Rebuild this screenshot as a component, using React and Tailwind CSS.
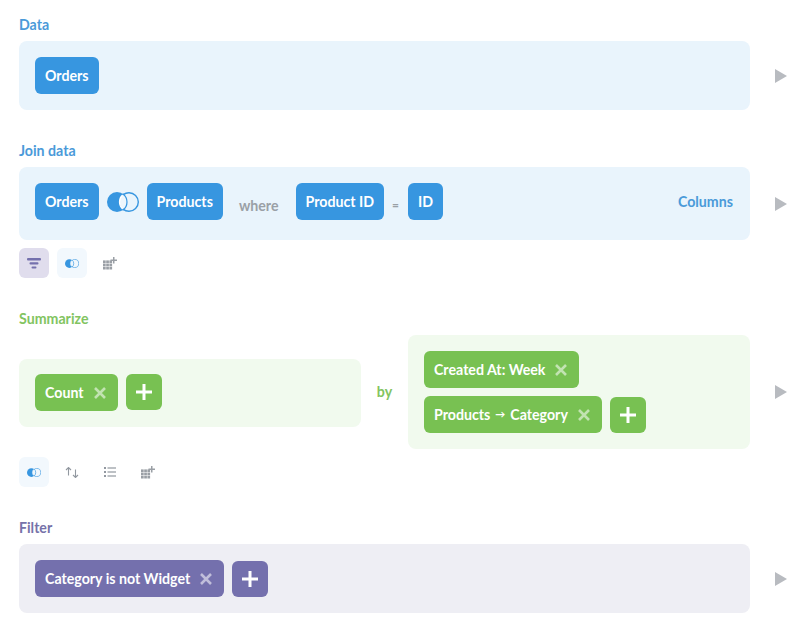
const font = { fontFamily: 'Lato, sans-serif' };

const themes = {
  blue: { panel: 'bg-[#e9f4fc]', pill: 'bg-[#3796e0]', label: 'text-[#4a9ad9]' },
  green: { panel: 'bg-[#f1faee]', pill: 'bg-[#78c152]', label: 'text-[#82c461]' },
  purple: { panel: 'bg-[#eeeef4]', pill: 'bg-[#7470ad]', label: 'text-[#7672a9]' },
};

const JoinIcon = ({ className }) => (
  <svg viewBox="0 0 32 20" className={className}>
    <circle cx="10" cy="10" r="10" fill="#3796e0" />
    <path d="M16 2A10 10 0 0 0 16 18A10 10 0 0 0 16 2Z" fill="#eef6fc" stroke="#3796e0" strokeWidth="1.2" />
    <path d="M15.6 3A9.4 9.4 0 0 0 15.6 17" fill="none" stroke="#fff" strokeWidth="1.2" />
    <circle cx="22" cy="10" r="9.3" fill="none" stroke="#3796e0" strokeWidth="1.4" strokeDasharray="42 16.4" strokeDashoffset="21" />
  </svg>
);

const FilterIcon = () => (
  <svg viewBox="0 0 14 11" className="w-[14px] h-[11px]" fill="#7470ad">
    <rect x="0" y="0" width="14" height="2.4" rx="1" />
    <rect x="2.5" y="4.2" width="9" height="2.2" rx="1" />
    <rect x="4.5" y="8.4" width="5" height="2.2" rx="1" />
  </svg>
);

const AddColumnIcon = () => (
  <svg viewBox="0 0 14 13" className="w-[14px] h-[13px]" fill="#9a9fa5">
    {[0, 1, 2].map(r =>
      [0, 1, 2].map(c => <rect key={`${r}-${c}`} x={c * 3.2} y={3.4 + r * 3.2} width="2.7" height="2.7" />)
    )}
    <path d="M10 0h1.5v2.5H14V4h-2.5v2.5H10V4H7.5V2.5H10z" />
  </svg>
);

const SortIcon = () => (
  <svg viewBox="0 0 14 11" className="w-[14px] h-[11px]" fill="none" stroke="#9298a0" strokeWidth="1.1">
    <path d="M3.5 8.5V0.5M1 3 3.5 0.5 6 3" />
    <path d="M10.5 2.5V10.5M8 8 10.5 10.5 13 8" />
  </svg>
);

const ListIcon = () => (
  <svg viewBox="0 0 12 10" className="w-[12px] h-[10px]" fill="#9298a0">
    <rect x="0" y="0" width="2" height="2" />
    <rect x="0" y="4" width="2" height="2" />
    <rect x="0" y="8" width="2" height="2" />
    <rect x="3.5" y="0.4" width="8.5" height="1.2" />
    <rect x="3.5" y="4.4" width="8.5" height="1.2" />
    <rect x="3.5" y="8.4" width="8.5" height="1.2" />
  </svg>
);

const Pill = ({ theme, children, onRemove }) => (
  <div className={`h-[37px] px-[10px] rounded-[6px] flex items-center text-white text-[14.2px] font-bold whitespace-nowrap ${themes[theme].pill}`}>
    {children}
    {onRemove && (
      <svg viewBox="0 0 12 12" className="w-[12px] h-[12px] ml-[10px] mr-[2px]" stroke="#fff" strokeOpacity="0.55" strokeWidth="2.6">
        <path d="M1 1 11 11M11 1 1 11" />
      </svg>
    )}
  </div>
);

const AddButton = ({ theme }) => (
  <div className={`w-[36px] h-[36px] rounded-[6px] flex items-center justify-center ${themes[theme].pill}`}>
    <svg viewBox="0 0 16 16" className="w-[16px] h-[16px]" fill="#fff">
      <path d="M6.5 0h3v6.5H16v3H9.5V16h-3V9.5H0v-3h6.5z" />
    </svg>
  </div>
);

const Arrow = () => (
  <svg viewBox="0 0 12 14" className="w-[12px] h-[14px] ml-[25px] shrink-0" fill="#b8bbc0">
    <path d="M0 0 12 7 0 14z" />
  </svg>
);

const Label = ({ theme, children, className = '' }) => (
  <div className={`h-[18px] leading-[18px] text-[14.2px] font-bold ${themes[theme].label} ${className}`}>{children}</div>
);

const Tile = ({ bg = '', children }) => (
  <div className={`w-[30px] h-[30px] rounded-[6px] flex items-center justify-center ${bg}`}>{children}</div>
);

const App = () => (
  <div className="w-[810px] h-[627px] bg-white pl-[19px] pt-[16px] overflow-hidden" style={font}>
    <Label theme="blue" className="mb-[7px]">Data</Label>
    <div className="flex items-center">
      <div className={`w-[731px] p-[16px] rounded-[8px] flex ${themes.blue.panel}`}>
        <Pill theme="blue">Orders</Pill>
      </div>
      <Arrow />
    </div>

    <Label theme="blue" className="mt-[32px] mb-[7px]">Join data</Label>
    <div className="flex items-center">
      <div className={`w-[731px] pt-[16px] pb-[20px] pl-[16px] pr-[17px] rounded-[8px] flex items-center ${themes.blue.panel}`}>
        <Pill theme="blue">Orders</Pill>
        <JoinIcon className="w-[32px] h-[20px] mx-[8px]" />
        <Pill theme="blue">Products</Pill>
        <span className="ml-[16px] mr-[17px] mt-[8px] text-[14.2px] font-bold text-[#9aa0a6]">where</span>
        <Pill theme="blue">Product ID</Pill>
        <span className="ml-[8px] mr-[9px] mt-[6px] text-[12px] font-bold text-[#9aa0a6]">=</span>
        <Pill theme="blue">ID</Pill>
        <span className="ml-auto text-[14.2px] font-bold text-[#4a9ad9]">Columns</span>
      </div>
      <Arrow />
    </div>
    <div className="flex gap-[8px] mt-[8px]">
      <Tile bg="bg-[#e0dded]"><FilterIcon /></Tile>
      <Tile bg="bg-[#f2f8fd]"><JoinIcon className="w-[14px] h-[9px]" /></Tile>
      <Tile><AddColumnIcon /></Tile>
    </div>

    <Label theme="green" className="mt-[32px] mb-[7px]">Summarize</Label>
    <div className="flex items-center">
      <div className="w-[731px] flex items-center">
        <div className={`w-[342px] mt-[2px] pt-[15px] pb-[16px] px-[16px] rounded-[8px] flex items-start gap-[8px] ${themes.green.panel}`}>
          <Pill theme="green" onRemove>Count</Pill>
          <AddButton theme="green" />
        </div>
        <div className={`flex-1 text-center text-[14.2px] font-bold ${themes.green.label}`}>by</div>
        <div className={`w-[342px] p-[16px] rounded-[8px] flex flex-col gap-[8px] ${themes.green.panel}`}>
          <div className="flex">
            <Pill theme="green" onRemove>Created At: Week</Pill>
          </div>
          <div className="flex items-end gap-[8px]">
            <Pill theme="green" onRemove>
              Products<span className="text-[10px] mx-[5px]">→</span>Category
            </Pill>
            <AddButton theme="green" />
          </div>
        </div>
      </div>
      <Arrow />
    </div>
    <div className="flex gap-[8px] mt-[8px]">
      <Tile bg="bg-[#f2f8fd]"><JoinIcon className="w-[14px] h-[9px]" /></Tile>
      <Tile><SortIcon /></Tile>
      <Tile><ListIcon /></Tile>
      <Tile><AddColumnIcon /></Tile>
    </div>

    <Label theme="purple" className="mt-[32px] mb-[7px]">Filter</Label>
    <div className="flex items-center">
      <div className={`w-[731px] p-[16px] rounded-[8px] flex items-end gap-[8px] ${themes.purple.panel}`}>
        <Pill theme="purple" onRemove>Category is not Widget</Pill>
        <AddButton theme="purple" />
      </div>
      <Arrow />
    </div>
  </div>
);

export default App;
